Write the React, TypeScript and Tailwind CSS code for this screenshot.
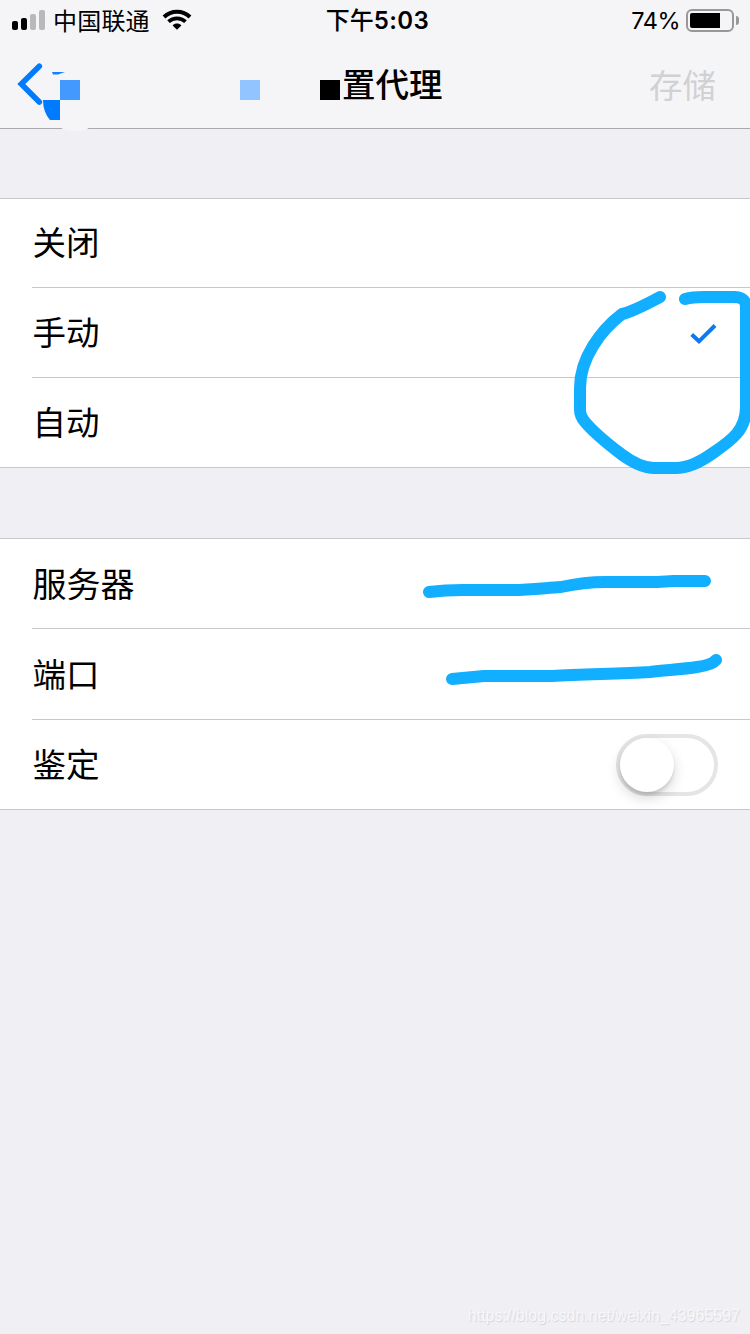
import { useState } from "react";

interface SignalBar {
  height: string;
  color: string;
}

const signalBars: SignalBar[] = [
  { height: "h-[9px]", color: "bg-black" },
  { height: "h-[12px]", color: "bg-black" },
  { height: "h-[16px]", color: "bg-[#b9b9bb]" },
  { height: "h-[20px]", color: "bg-[#b9b9bb]" },
];

const modes = [
  { label: "关闭", height: "h-[88px]" },
  { label: "手动", height: "h-[89px]" },
  { label: "自动", height: "h-[89px]" },
];

const StatusBar = () => (
  <div className="flex h-10 items-center justify-between pl-3 pr-[11px]">
    <div className="flex w-[280px] items-center">
      <div className="flex h-5 items-end gap-[3px]">
        {signalBars.map((bar) => (
          <div
            key={bar.height}
            className={`w-1.5 rounded-[2px] ${bar.height} ${bar.color}`}
          />
        ))}
      </div>
      <span className="ml-2 pt-[3px] text-[24px] leading-10 tracking-[0.2px]">
        中国联通
      </span>
      <svg
        width="30"
        height="22"
        viewBox="0 0 30 22"
        className="ml-[12px]"
        fill="none"
        stroke="#000"
      >
        <path d="M2 8C9.3 0.9 20.7 0.9 28 8" strokeWidth="4" />
        <path d="M6.5 12.7C11.3 8.3 18.7 8.3 23.5 12.7" strokeWidth="3.8" />
        <path
          d="M15 20.8L10.6 16.4C13.1 14 16.9 14 19.4 16.4Z"
          fill="#000"
          stroke="none"
        />
      </svg>
    </div>

    <span className="flex items-center pl-1 pt-[2px] text-[24px] font-medium leading-10">
      下午
      <span className="text-[24px] font-semibold tracking-[0.4px]">5:03</span>
    </span>

    <div className="flex w-[280px] items-center justify-end">
      <span className="pt-[2px] text-[23.5px] leading-10 tracking-[-0.5px]">
        74%
      </span>
      <div className="ml-1.5 flex h-[23px] w-12 rounded-[6px] border-2 border-[#98989a] p-[2px]">
        <div className="h-[15px] w-[30px] rounded-l-[2px] bg-black" />
      </div>
      <div className="ml-[2px] h-[9px] w-[3px] rounded-r-full bg-[#98989a]" />
    </div>
  </div>
);

const NavBar = () => (
  <div className="relative flex h-[88px] items-center justify-between pl-[17px] pr-[34px]">
    <svg width="28" height="44" viewBox="0 0 28 44" fill="none">
      <path
        d="M22.3 4.3L4.3 22L22.3 40"
        stroke="#007aff"
        strokeWidth="5.6"
        strokeLinecap="round"
        strokeLinejoin="miter"
      />
    </svg>
    <span className="pt-[3px] text-[33.5px] leading-[88px] text-[#d1d1d3]">
      存储
    </span>
    <span className="absolute left-[342px] top-px text-[33.5px] font-medium leading-[88px]">
      置代理
    </span>

    {/* scrubbed-out blocks over the back label and title */}
    <svg
      className="absolute left-0 top-0"
      width="400"
      height="94"
      viewBox="0 40 400 94"
    >
      <path d="M52 72H65L58 74.6H53Z" fill="#1482ff" />
      <rect x="60" y="80" width="20" height="20" fill="#4499ff" />
      <path d="M43 100H60V120H50Q43 112 43 100Z" fill="#007aff" />
      <rect x="240" y="80" width="20" height="20" fill="#92c4ff" />
      <rect x="320" y="80" width="20" height="20" fill="#000" />
      <path d="M60 127H90Q86 131 75 131Q64 131 60 127Z" fill="#f5f5f8" />
    </svg>
  </div>
);

const Annotations = () => (
  <svg
    className="pointer-events-none absolute left-0 top-0"
    width="750"
    height="1334"
    viewBox="0 0 750 1334"
    fill="none"
    stroke="#12aeff"
    strokeWidth="12"
    strokeLinecap="round"
    strokeLinejoin="round"
  >
    <path d="M660 297C645 305 632 312 622 314C601 330 580 358 580 388V410Q580 416 585 422C596 435 608 444 621 454Q640 468 654 468H676Q692 468 713 453C732 440 746 430 746 407V307Q746 297 734 297H704Q692 297 685 299" />
    <path d="M429 592Q445 590 463 590H513C530 590 545 588 561 587C575 584 588 582 605 582H657L674 581H705" />
    <path d="M452 679L484 676H552C585 674 618 674 650 672C668 670 684 669 697 667Q712 665 716 660" />
  </svg>
);

const App = () => {
  const [mode, setMode] = useState("手动");
  const [auth, setAuth] = useState(false);

  return (
    <div className="relative h-[1334px] w-[750px] overflow-hidden bg-[#efeff4] font-['Inter','Noto_Sans_CJK_SC',sans-serif] text-black">
      <header className="h-[129px] border-b border-[#a8a8ad] bg-[#f5f5f8]">
        <StatusBar />
        <NavBar />
      </header>

      <section className="mt-[69px] border-y border-[#c8c7cc] bg-white pl-8">
        {modes.map((item) => (
          <div
            key={item.label}
            onClick={() => setMode(item.label)}
            className={`box-content flex items-center justify-between border-b border-[#c8c7cc] pr-[33px] last:border-b-0 ${item.height}`}
          >
            <span className="pl-[0.5px] pt-[2px] text-[33.5px] leading-none">
              {item.label}
            </span>
            {mode === item.label && (
              <svg
                width="27"
                height="22"
                viewBox="0 0 27 22"
                fill="none"
                className="mt-[2px]"
              >
                <path
                  d="M1.7 11.5L9 18.3L25 2.5"
                  stroke="#0c79f2"
                  strokeWidth="4"
                />
              </svg>
            )}
          </div>
        ))}
      </section>

      <section className="mt-[70px] border-y border-[#c8c7cc] bg-white pl-8">
        <div className="flex h-[90px] items-center border-b border-[#c8c7cc]">
          <span className="pl-[0.5px] pt-[2px] text-[34px] leading-none">
            服务器
          </span>
        </div>
        <div className="flex h-[91px] items-center border-b border-[#c8c7cc]">
          <span className="pl-[0.5px] pt-[3px] text-[33.5px] leading-none">
            端口
          </span>
        </div>
        <div className="flex h-[89px] items-center justify-between pr-8">
          <span className="pl-[0.5px] pt-[2px] text-[33.5px] leading-none">
            鉴定
          </span>
          <button
            type="button"
            aria-pressed={auth}
            onClick={() => setAuth(!auth)}
            className={`mt-px flex h-[62px] w-[102px] rounded-full border-4 border-[#e5e5e5] ${auth ? "justify-end bg-[#4cd964]" : "bg-white"}`}
          >
            <span className="size-[54px] rounded-full bg-white shadow-[0_6px_14px_rgba(0,0,0,0.16),0_3px_3px_rgba(0,0,0,0.1)]" />
          </button>
        </div>
      </section>

      <Annotations />

      <span className="absolute bottom-[8px] right-[10px] font-['Liberation_Sans',sans-serif] text-[16px] leading-5 text-[#f7f7fa] [text-shadow:1px_1px_1px_#d6d6da]">
        https://blog.csdn.net/weixin_43965597
      </span>
    </div>
  );
};

export default App;
